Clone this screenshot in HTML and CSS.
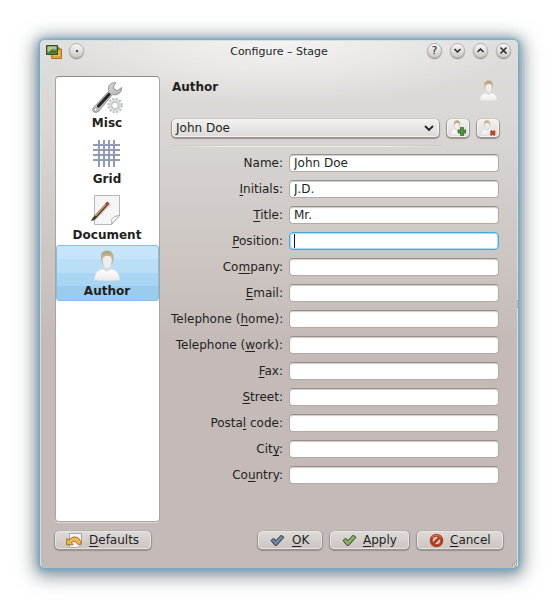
FILE: index.html
```
<!DOCTYPE html>
<html lang="en">
<head>
<meta charset="utf-8">
<title>Configure – Stage</title>
<link rel="stylesheet" href="styles.css">
</head>
<body>
<svg class="defs" width="0" height="0">
  <defs>
    <linearGradient id="shirt" x1="0" y1="0" x2="0" y2="1"><stop offset="0" stop-color="#fff"/><stop offset="1" stop-color="#e9e9e9"/></linearGradient>
    <linearGradient id="hair" x1="0" y1="0" x2="0" y2="1"><stop offset="0" stop-color="#b3a078"/><stop offset="1" stop-color="#ddd0b4"/></linearGradient>
    <linearGradient id="metal" x1="0" y1="0" x2="1" y2="1"><stop offset="0" stop-color="#f4f4f4"/><stop offset="1" stop-color="#929292"/></linearGradient>
    <symbol id="person" viewBox="0 0 28 32">
      <path d="M1 30C2 22 5 20 10 19L14 21L18 19C23 20 26 22 27 30Q14 32 1 30Z" fill="url(#shirt)" stroke="#d5d5d5" stroke-width=".6"/>
      <path d="M10.500 15h7v4.500l-3.500 2-3.500-2z" fill="#dddcd8"/>
      <path d="M8.500 9C7.500 3 10 1 14.300 1S20.500 4 20 10L18.500 14H10Z" fill="url(#hair)" stroke="#b09b70" stroke-width=".6"/>
      <path d="M9.700 9C10 5.500 17.500 4.500 18.500 8C19.500 13 17 18 14.300 18S9.500 14 9.700 9Z" fill="#eeeeec"/>
    </symbol>
    <symbol id="check" viewBox="0 0 15 13">
      <path d="M1 6.500L3.500 4.300L6 6.500L11.200 1.200L14 3.300L6.500 11.500H5Z" fill="currentColor" stroke="#36443f" stroke-width="1" stroke-linejoin="round"/>
      <path d="M3 6.500L5.700 9.300L12 2.800" fill="none" stroke="#fff" stroke-opacity=".25"/>
    </symbol>
  </defs>
</svg>
<main class="window">
  <header class="titlebar">
    <svg class="app-icon" width="17" height="16" viewBox="0 0 17 16">
      <path d="M10 2l4 2v9l-8 1z" fill="#44689b"/>
      <path d="M6 8l4-3h5.500v9.500H5.500z" fill="#dfa33d" stroke="#ad721e"/>
      <path d="M8 8.500h6M7 11h7" stroke="#f6d17b"/>
      <rect x=".7" y="1.700" width="10.600" height="8.600" fill="#79a24d" stroke="#244125" stroke-width="1.200"/>
      <path d="M1.500 2.500h9v3l-3-1-3 3-3 0z" fill="#b4cb90"/><path d="M2 9l4-4 2 2 2-1v3z" fill="#477332"/>
    </svg>
    <span class="round"><i class="dot"></i></span>
    <h1>Configure – Stage</h1>
    <div class="controls">
      <span class="round">?</span>
      <span class="round"><svg width="9" height="9"><path d="M1.500 3L4.500 6L7.500 3"/></svg></span>
      <span class="round"><svg width="9" height="9"><path d="M1.500 6L4.500 3L7.500 6"/></svg></span>
      <span class="round"><svg width="9" height="9"><path d="M1.500 1.500L7.500 7.500M7.500 1.500L1.500 7.500"/></svg></span>
    </div>
  </header>
  <div class="content">
    <nav class="pages">
      <div class="page">
        <svg width="32" height="32" viewBox="0 0 32 32">
          <circle cx="24" cy="23.500" r="6.500" fill="none" stroke="#b9bcbe" stroke-width="2.500" stroke-dasharray="2 1.400"/>
          <circle cx="24" cy="23.500" r="4.700" fill="#fff" stroke="#d7d9da" stroke-width="2.600"/>
          <circle cx="24" cy="23.500" r="3.300" fill="none" stroke="#999" stroke-width=".7"/>
          <path d="M2 26L18 9C16 5 19 0 25 .8L22.500 4L23 7L26.500 8.500L30.500 5.500C31 11 26 14 21.500 12.500L7.500 29.500C4 32 0 29 2 26Z" fill="url(#metal)" stroke="#858585" stroke-width=".8"/>
          <path d="M7.500 24L18 12.500" stroke="#26242a" stroke-width="3.200" stroke-linecap="round"/>
          <circle cx="4.700" cy="27.600" r="1.500" fill="#fff" stroke="#888" stroke-width=".7"/>
        </svg><span>Misc</span></div>
      <div class="page">
        <svg width="32" height="32" viewBox="0 0 32 32"><path d="M7 3v27M12 3v27M17 3v27M22 3v27M1 8h27M1 13h27M1 18h27M1 23h27" transform="translate(1 -1)" stroke="#929ab4" stroke-width="2"/></svg><span>Grid</span></div>
      <div class="page">
        <svg width="32" height="32" viewBox="0 0 32 32">
          <path d="M3.500 1.500h25v20l-8 9h-17z" fill="#f5f5f5" stroke="#b7b7b7"/>
          <path d="M20.500 30.500c1-3 0-5 0-5s3-4 8-4z" fill="#fff" stroke="#aaa"/>
          <path d="M3 25.500L19 10" stroke="#d5d5d5" stroke-width="3"/>
          <path d="M2.500 25L17 9" stroke="#493722" stroke-width="2.800"/><path d="M4.500 22L15.500 10" stroke="#d6a053" stroke-width="1.200"/>
          <path d="M15.500 10.500L17.500 8.500" stroke="#a44335" stroke-width="2.600"/><path d="M0 27l1.500-3 2 2z" fill="#372b20"/>
        </svg><span>Document</span></div>
      <div class="page selected"><svg width="28" height="32"><use href="#person"/></svg><span>Author</span></div>
    </nav>
    <section class="settings">
      <div class="heading"><h2>Author</h2><svg width="19" height="22"><use href="#person"/></svg></div>
      <div class="profile">
        <div class="combo"><span>John Doe</span><svg width="10" height="7"><path d="M1 1L5 5L9 1" fill="none" stroke="#222" stroke-width="1.800"/></svg></div>
        <button class="tool"><svg width="16" height="16" viewBox="0 0 16 16"><use href="#person" width="14" height="16"/><path d="M8 10h2.500V7.500h3V10H16v3h-2.500v2.500h-3V13H8z" fill="#539244" stroke="#285b24" stroke-width=".7"/></svg></button>
        <button class="tool"><svg width="16" height="16" viewBox="0 0 16 16"><use href="#person" width="14" height="16" opacity=".85"/><path d="M10.500 11l4.500 4M15 11l-4.500 4" stroke="#b64425" stroke-width="2.400"/></svg></button>
      </div>
      <div class="divider"></div>
      <form class="fields">
        <label for="name">Name:</label><input id="name" value="John Doe">
        <label for="initials"><u>I</u>nitials:</label><input id="initials" value="J.D.">
        <label for="title"><u>T</u>itle:</label><input id="title" value="Mr.">
        <label for="position"><u>P</u>osition:</label><div class="active" id="position"><i></i></div>
        <label for="company">Co<u>m</u>pany:</label><input id="company">
        <label for="email"><u>E</u>mail:</label><input id="email">
        <label for="home">Telephone (<u>h</u>ome):</label><input id="home">
        <label for="work">Telephone (<u>w</u>ork):</label><input id="work">
        <label for="fax"><u>F</u>ax:</label><input id="fax">
        <label for="street"><u>S</u>treet:</label><input id="street">
        <label for="postal">Posta<u>l</u> code:</label><input id="postal">
        <label for="city">Cit<u>y</u>:</label><input id="city">
        <label for="country">Co<u>u</u>ntry:</label><input id="country">
      </form>
    </section>
  </div>
  <footer class="actions">
    <button class="defaults"><svg width="17" height="17" viewBox="0 0 17 17"><path d="M3.500 1.500h12v11l-4 3h-8z" fill="#f6f5f4" stroke="#aaa5a2"/><path d="M.7 6.500v6.300h6.500L5.300 10.600Q9 7.500 12 12.500L15.500 12Q14 4.500 8 5Q5 5.300 3 8z" fill="#e6b853" stroke="#a76420" stroke-width=".9"/></svg><span><u>D</u>efaults</span></button>
    <button class="ok"><svg width="15" height="13"><use href="#check"/></svg><span><u>O</u>K</span></button>
    <button class="apply"><svg width="15" height="13"><use href="#check"/></svg><span><u>A</u>pply</span></button>
    <button class="cancel"><svg width="15" height="15" viewBox="0 0 15 15"><circle cx="7.500" cy="7.500" r="5.300" fill="#d6c4b9" stroke="#b03b21" stroke-width="3"/><path d="M3.800 11.200L11.200 3.800" stroke="#b03b21" stroke-width="2.600"/><path d="M3 4.500Q7.500-.5 12 4.500" fill="none" stroke="#d98d54" stroke-width="1"/></svg><span><u>C</u>ancel</span></button>
  </footer>
  <svg class="grip" width="7" height="7"><path d="M5 1h1M3 3h1M5 4h1M1 5h1M4 6h1" stroke="#807a77"/><path d="M6 2h1M4 4h1M2 6h1M6 5h1" stroke="#fff"/></svg>
  <svg class="edge" width="3" height="9"><path d="M1 1h1M1 4h1M1 7h1" stroke="#697e8a"/></svg>
</main>
</body>
</html>
```
FILE: styles.css
```
* { box-sizing: border-box; }
body { margin: 0; padding: 40px; width: 558px; height: 608px; overflow: hidden; background: #fff; font: 12px "DejaVu Sans", sans-serif; color: #221f1e; }
.defs { position: absolute; }
svg { flex: none; }
.window {
  position: relative; width: 478px; height: 528px; border-radius: 5px;
  border: 1px solid #d5e0e5; border-bottom-color: #c4bbb8;
  background: radial-gradient(ellipse 235px 64px at 50% 0, #f5f4f3, rgba(240,239,238,.65) 50%, transparent), linear-gradient(#dfdedc 0, #dad7d4 80px, #c4bbb8 300px);
  box-shadow: 0 0 2px 1px #72accb, 0 1px 7px 2px rgba(100,150,180,.65), 0 3px 18px 6px rgba(75,88,100,.6);
}
.titlebar { height: 35px; padding: 2px 6px 0 5px; display: flex; align-items: flex-start; }
.app-icon { margin-top: 1px; }
.app-icon + .round { margin-left: 6px; }
h1 { flex: 1; margin: 2px 0 0 71px; font-size: 11px; line-height: 13px; font-weight: normal; text-align: center; }
.controls { display: flex; gap: 8px; margin-left: 24px; }
.round { width: 15px; height: 15px; border-radius: 50%; display: flex; justify-content: center; align-items: center; background: linear-gradient(#f7f7f6, #cecbc9); border: 1px solid #b3afac; box-shadow: 0 1px 1px #8b8581; font-size: 11px; line-height: 13px; }
.round svg { fill: none; stroke: #282627; stroke-width: 1.5; }
.dot { width: 2px; height: 2px; background: #444; }
.content { display: flex; padding: 0 18px 0 14px; height: 446px; }
.pages { flex: none; width: 105px; height: 446px; background: #fff; border: 1px solid #aaa39f; border-top-color: #918b87; border-radius: 4px; box-shadow: 0 1px #ddd6d3; }
.page { height: 56px; display: flex; flex-direction: column; align-items: center; padding: 5px 1px 0 0; font-weight: bold; line-height: 14px; }
.page span { margin-top: 2px; }
.selected { background: linear-gradient(#c6e5fa 0 25%, #b9def6 25% 50%, #a8d5f3 50% 75%, #9acced 75%); border: 1px solid #80c0e6; border-radius: 3px; padding-top: 4px; }
.settings { flex: none; width: 328px; margin-left: 11px; }
.heading { height: 42px; display: flex; justify-content: space-between; padding: 4px 1px 0 0; }
h2 { margin: 0; padding-left: 1px; font-size: 12px; line-height: 14px; }
.profile { display: flex; align-items: flex-start; gap: 6px; height: 28px; }
.combo, button { border: 1px solid #f5f4f3; border-radius: 4px; background: linear-gradient(#f2f1f0, #dedbd9); box-shadow: 0 0 1px #928b87, 0 1px 1px 1px #9a938f; }
.combo { flex: none; width: 267px; height: 18px; margin: 1px 1px 0; padding: 0 4px 0 3px; display: flex; justify-content: space-between; align-items: center; line-height: 16px; }
button { font: inherit; color: inherit; padding: 0; display: flex; align-items: center; }
.tool { flex: none; width: 22px; height: 18px; margin: 1px; justify-content: center; }
.divider { height: 1px; width: 270px; background: linear-gradient(90deg, transparent, #f2efed 20%, #f2efed 80%, transparent); box-shadow: 0 -1px rgba(125,115,110,.1); }
.fields { display: grid; grid-template-columns: 112px 210px; column-gap: 6px; grid-auto-rows: 26px; align-items: center; margin-top: 3px; }
label { text-align: right; white-space: nowrap; line-height: 14px; }
input, .active { width: 210px; height: 18px; padding: 0 0 1px 4px; font: inherit; color: inherit; background: #fff; border: 1px solid #b2aaa6; border-top-color: #958e8a; border-radius: 4px; box-shadow: inset 0 1px 1px #d1cdca; outline: 0; }
.active { border-color: #43a8dc; box-shadow: inset 0 0 1px 1px #a6daf5; padding: 1px 4px; }
.active i { display: block; width: 1px; height: 14px; background: #111; }
u { text-underline-offset: 2px; text-decoration-thickness: 1px; text-decoration-skip-ink: none; }
.actions { display: flex; padding: 9px 13px 0 14px; }
.actions button { height: 18px; background: linear-gradient(#dedad8, #ccc5c2); border-color: #e8e4e2; padding-left: 11px; }
.actions .defaults { width: 96px; margin-right: 107px; padding-left: 10px; }
.defaults span { margin-left: 6px; }
.ok { width: 64px; margin-right: 8px; color: #63789f; }
.apply { width: 79px; margin-right: 8px; color: #80a951; }
.cancel { width: 86px; }
.ok span, .apply span, .cancel span { color: #221f1e; margin-left: 7px; }
.apply span, .cancel span { margin-left: 6px; }
.grip { position: absolute; right: -1px; bottom: 0; }
.edge { position: absolute; right: -2px; top: 259px; }
```
